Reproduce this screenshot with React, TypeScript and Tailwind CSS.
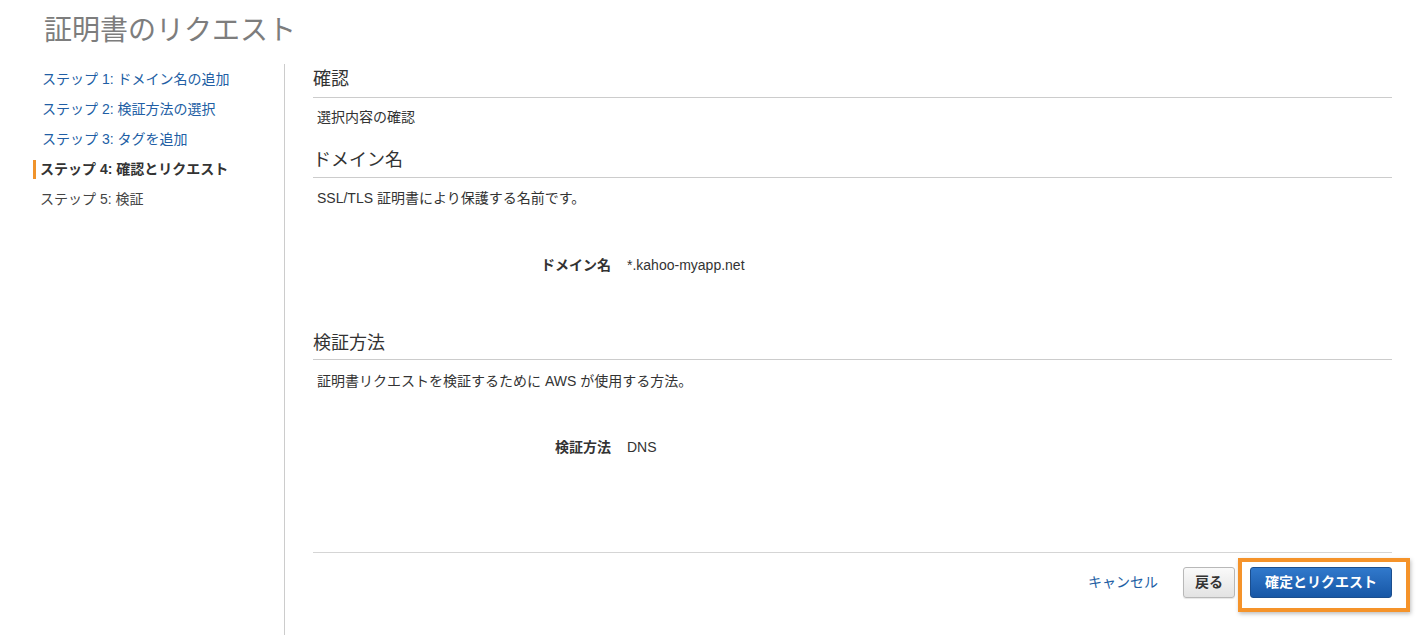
import React from "react"

const font = { fontFamily: '"Liberation Sans", "Noto Sans CJK JP", sans-serif' }

const steps = [
  { label: "ステップ 1: ドメイン名の追加", state: "link" },
  { label: "ステップ 2: 検証方法の選択", state: "link" },
  { label: "ステップ 3: タグを追加", state: "link" },
  { label: "ステップ 4: 確認とリクエスト", state: "active" },
  { label: "ステップ 5: 検証", state: "todo" },
]

function SectionHeading({ children, className = "" }: { children: React.ReactNode; className?: string }) {
  return (
    <div className={`border-b border-[#cccccc] pt-[2px] text-[18px] leading-[26px] text-[#333] ${className}`}>
      {children}
    </div>
  )
}

function Row({ label, value, className = "" }: { label: string; value: string; className?: string }) {
  return (
    <div className={`flex text-[14px] leading-[20px] ${className}`}>
      <div className="w-[298px] text-right font-bold text-[#333]">{label}</div>
      <div className="ml-4 text-[#333]">{value}</div>
    </div>
  )
}

export default function App() {
  return (
    <div className="relative h-[644px] w-full overflow-hidden bg-white" style={font}>
      <h1 className="pl-[44px] pt-[13px] text-[28px] leading-[36px] text-[#7d7d7d]">
        証明書のリクエスト
      </h1>

      <div className="mt-[15px] flex">
        {/* Sidebar */}
        <div className="h-[571px] w-[285px] shrink-0 border-r border-[#cccccc]">
          <div className="flex flex-col">
            {steps.map((s) =>
              s.state === "link" ? (
                <div key={s.label} className="flex h-[30px] items-center pl-[42px] text-[14px] text-[#215ea4]">
                  {s.label}
                </div>
              ) : s.state === "active" ? (
                <div key={s.label} className="flex h-[30px] items-center pl-[33px] text-[14px] font-bold text-[#333]">
                  <span className="mr-[4px] h-[19px] w-[3px] bg-[#f0932b]" />
                  {s.label}
                </div>
              ) : (
                <div key={s.label} className="flex h-[30px] items-center pl-[40px] text-[14px] text-[#444]">
                  {s.label}
                </div>
              )
            )}
          </div>
        </div>

        {/* Main */}
        <div className="flex flex-1 flex-col pl-[28px] pr-[29px]">
          <SectionHeading className="pb-[5px]">確認</SectionHeading>
          <p className="mt-[9px] pl-[4px] text-[14px] leading-[20px] text-[#333]">選択内容の確認</p>

          <SectionHeading className="mt-[18px] pb-[4px]">ドメイン名</SectionHeading>
          <p className="mt-[10px] pl-[4px] text-[14px] leading-[20px] text-[#333]">
            SSL/TLS 証明書により保護する名前です。
          </p>
          <Row label="ドメイン名" value="*.kahoo-myapp.net" className="mt-[47px]" />

          <SectionHeading className="mt-[53px] pb-[3px]">検証方法</SectionHeading>
          <p className="mt-[11px] pl-[4px] text-[14px] leading-[20px] text-[#333]">
            証明書リクエストを検証するために AWS が使用する方法。
          </p>
          <Row label="検証方法" value="DNS" className="mt-[46px]" />

          <div className="mt-[95px] border-t border-[#d5d5d5]" />

          <div className="mt-[14px] flex items-center justify-end">
            <a className="mr-[25px] text-[14px] text-[#215ea4]">キャンセル</a>
            <button className="h-[31px] rounded-[3px] border border-[#b8b8b8] bg-gradient-to-b from-[#fafafa] to-[#e3e3e3] px-[11px] text-[14px] font-bold text-[#333] shadow-[0_1px_1px_rgba(0,0,0,0.1)]">
              戻る
            </button>
            <div className="relative ml-[15px]">
              <button className="h-[31px] w-[142px] rounded-[3px] border border-[#1b4e8e] bg-gradient-to-b from-[#3179cc] to-[#1757a6] text-[14px] font-bold text-white">
                確定とリクエスト
              </button>
              <span className="pointer-events-none absolute -left-[12px] -top-[9px] -right-[18px] -bottom-[14px] border-[4px] border-[#f5932a] shadow-[1px_2px_4px_rgba(0,0,0,0.25)]" />
            </div>
          </div>
        </div>
      </div>
    </div>
  )
}
